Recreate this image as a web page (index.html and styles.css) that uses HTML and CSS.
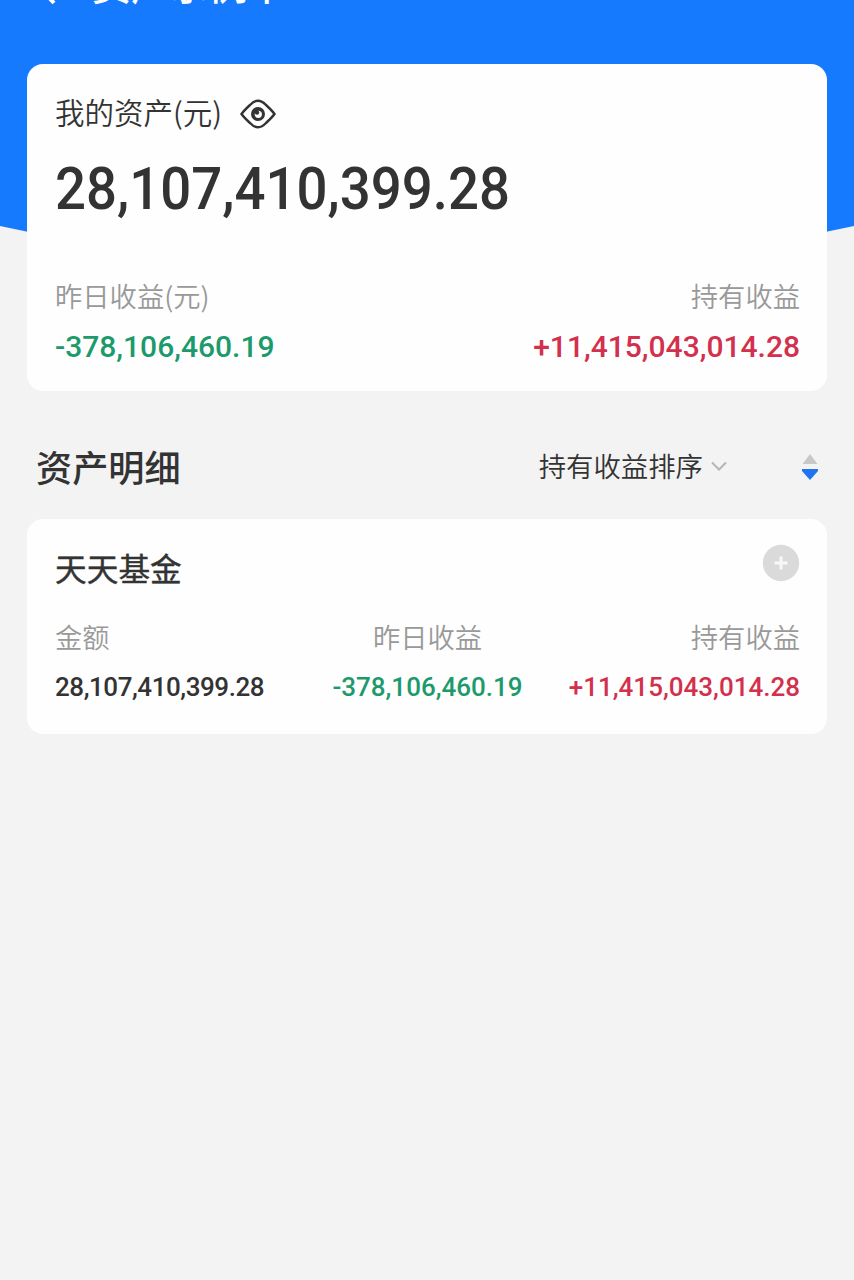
FILE: index.html
```html
<!DOCTYPE html>
<html lang="zh-CN">
<head>
    <meta charset="UTF-8">
    <meta name="viewport" content="width=device-width, initial-scale=1.0">
    <title>我的资产</title>
    <link rel="stylesheet" href="styles.css">
</head>
<body>
    <svg class="backdrop" viewBox="0 0 854 270" preserveAspectRatio="none">
        <path d="M0 0H854V226Q427 320 0 226Z" fill="#167aff"/>
    </svg>

    <header class="navbar">
        <svg class="back" width="22" height="34" viewBox="0 0 22 34" fill="none" stroke="#fff" stroke-width="4">
            <path d="M18 2L4 17L18 32"/>
        </svg>
        <span class="nav-title">资产示例卡</span>
    </header>

    <main>
        <section class="card summary">
            <div class="summary-title">
                <span>我的资产(元)</span>
                <svg width="36" height="30" viewBox="0 0 36 30" fill="none" stroke="#333" stroke-width="2.400">
                    <path d="M1.500 15Q4 11.500 10 6Q18 -2.500 26 6Q32 11.500 34.500 15Q32 18.500 26 24Q18 32.500 10 24Q4 18.500 1.500 15Z"/>
                    <circle cx="18" cy="15" r="5.500" fill="#333" stroke-width="3"/>
                    <circle cx="18.300" cy="15.300" r="3.600" fill="#fefefe" stroke="none"/>
                    <circle cx="17" cy="13.500" r="2.200" fill="#333" stroke="none"/>
                </svg>
            </div>
            <div class="total">28,107,410,399.28</div>
            <div class="row labels">
                <span>昨日收益(元)</span>
                <span>持有收益</span>
            </div>
            <div class="row values">
                <span class="down">-378,106,460.19</span>
                <span class="up">+11,415,043,014.28</span>
            </div>
        </section>

        <div class="section-head">
            <h2>资产明细</h2>
            <div class="sort">
                <span>持有收益排序</span>
                <svg width="16" height="10" viewBox="0 0 16 10" fill="none" stroke="#b5b5b5" stroke-width="2">
                    <path d="M1 1.500L8 8.500L15 1.500"/>
                </svg>
            </div>
            <svg class="order" width="16" height="26" viewBox="0 0 16 26">
                <path d="M8 0L15.500 10H0.500Z" fill="#c8c8c8"/>
                <path d="M8 26L0 17V15H16V17Z" fill="#1f74f0"/>
            </svg>
        </div>

        <section class="card fund">
            <div class="fund-head">
                <h3>天天基金</h3>
                <svg width="38" height="38" viewBox="0 0 38 38">
                    <circle cx="19" cy="19" r="18.200" fill="#dadada"/>
                    <path d="M19 12.500V25.500M12.500 19H25.500" stroke="#f8f8f8" stroke-width="3"/>
                </svg>
            </div>
            <div class="columns labels">
                <span>金额</span>
                <span>昨日收益</span>
                <span>持有收益</span>
            </div>
            <div class="columns amounts">
                <span>28,107,410,399.28</span>
                <span class="down">-378,106,460.19</span>
                <span class="up">+11,415,043,014.28</span>
            </div>
        </section>
    </main>
</body>
</html>
```

FILE: styles.css
```css
* {
    box-sizing: border-box;
}

body {
    margin: 0;
    min-height: 1280px;
    background-color: #f3f3f3;
    color: #333;
    font-family: "Noto Sans CJK SC", sans-serif;
    position: relative;
    overflow: hidden;
}

svg {
    display: block;
    flex: none;
}

/* blue curve that runs behind the first card */
.backdrop {
    position: absolute;
    top: 0;
    left: 0;
    width: 100%;
    height: 270px;
    z-index: -1;
}

/* scrolled almost out of view */
.navbar {
    display: flex;
    align-items: center;
    gap: 34px;
    height: 38px;
    margin-top: -32px;
    padding-left: 36px;
    color: #fff;
}

.back {
    margin-top: 2px;
}

.nav-title {
    font-size: 39px;
    font-weight: 500;
    line-height: 38px;
    margin-top: -8px;
}

main {
    padding: 58px 27px 0;
}

.card {
    background-color: #fefefe;
    border-radius: 16px;
    padding: 0 27px 0 28px;
}

.summary {
    height: 327px;
}

.summary-title {
    display: flex;
    align-items: center;
    gap: 18px;
    height: 96px;
    font-size: 29.5px;
    font-weight: 350;
}

.summary-title span {
    margin-top: -3px;
}

.summary-title svg {
    margin-top: 4px;
}

.total {
    height: 56px;
    font-family: Roboto, sans-serif;
    font-size: 59px;
    font-weight: 500;
    line-height: 58px;
    transform: scaleX(0.925);
    transform-origin: left;
}

.row {
    display: flex;
    justify-content: space-between;
}

.labels {
    color: #999;
    font-size: 27.3px;
    font-weight: 350;
    line-height: 40px;
}

.summary .labels {
    margin-top: 59px;
}

.values {
    margin-top: 12px;
    font-family: Roboto, sans-serif;
    font-size: 30px;
    font-weight: 500;
    line-height: 40px;
}

.down {
    color: #1c9a6c;
}

.up {
    color: #d2304c;
}

.section-head {
    display: flex;
    align-items: center;
    height: 128px;
    padding: 22px 9px 0;
}

h2 {
    margin: 0;
    font-size: 36.2px;
    font-weight: 500;
}

.sort {
    display: flex;
    align-items: center;
    gap: 8px;
    margin-left: auto;
    margin-right: 75px;
    font-size: 27.4px;
    font-weight: 350;
}

.sort span {
    margin-top: -2px;
}

.order {
    margin-top: 2px;
}

.fund {
    height: 215px;
    padding-top: 25px;
}

.fund-head {
    display: flex;
    justify-content: space-between;
    height: 50px;
}

h3 {
    margin: 0;
    font-size: 31.7px;
    font-weight: 400;
    line-height: 46px;
    -webkit-text-stroke: 0.4px #333;
}

.columns {
    display: grid;
    grid-template-columns: 1fr auto 1fr;
}

.columns span:last-child {
    text-align: right;
}

.fund .labels {
    margin-top: 22px;
}

.amounts {
    margin-top: 11px;
    font-family: Roboto, sans-serif;
    font-size: 26px;
    font-weight: 500;
    line-height: 40px;
}

.amounts span:first-child {
    letter-spacing: -0.45px;
}
```
